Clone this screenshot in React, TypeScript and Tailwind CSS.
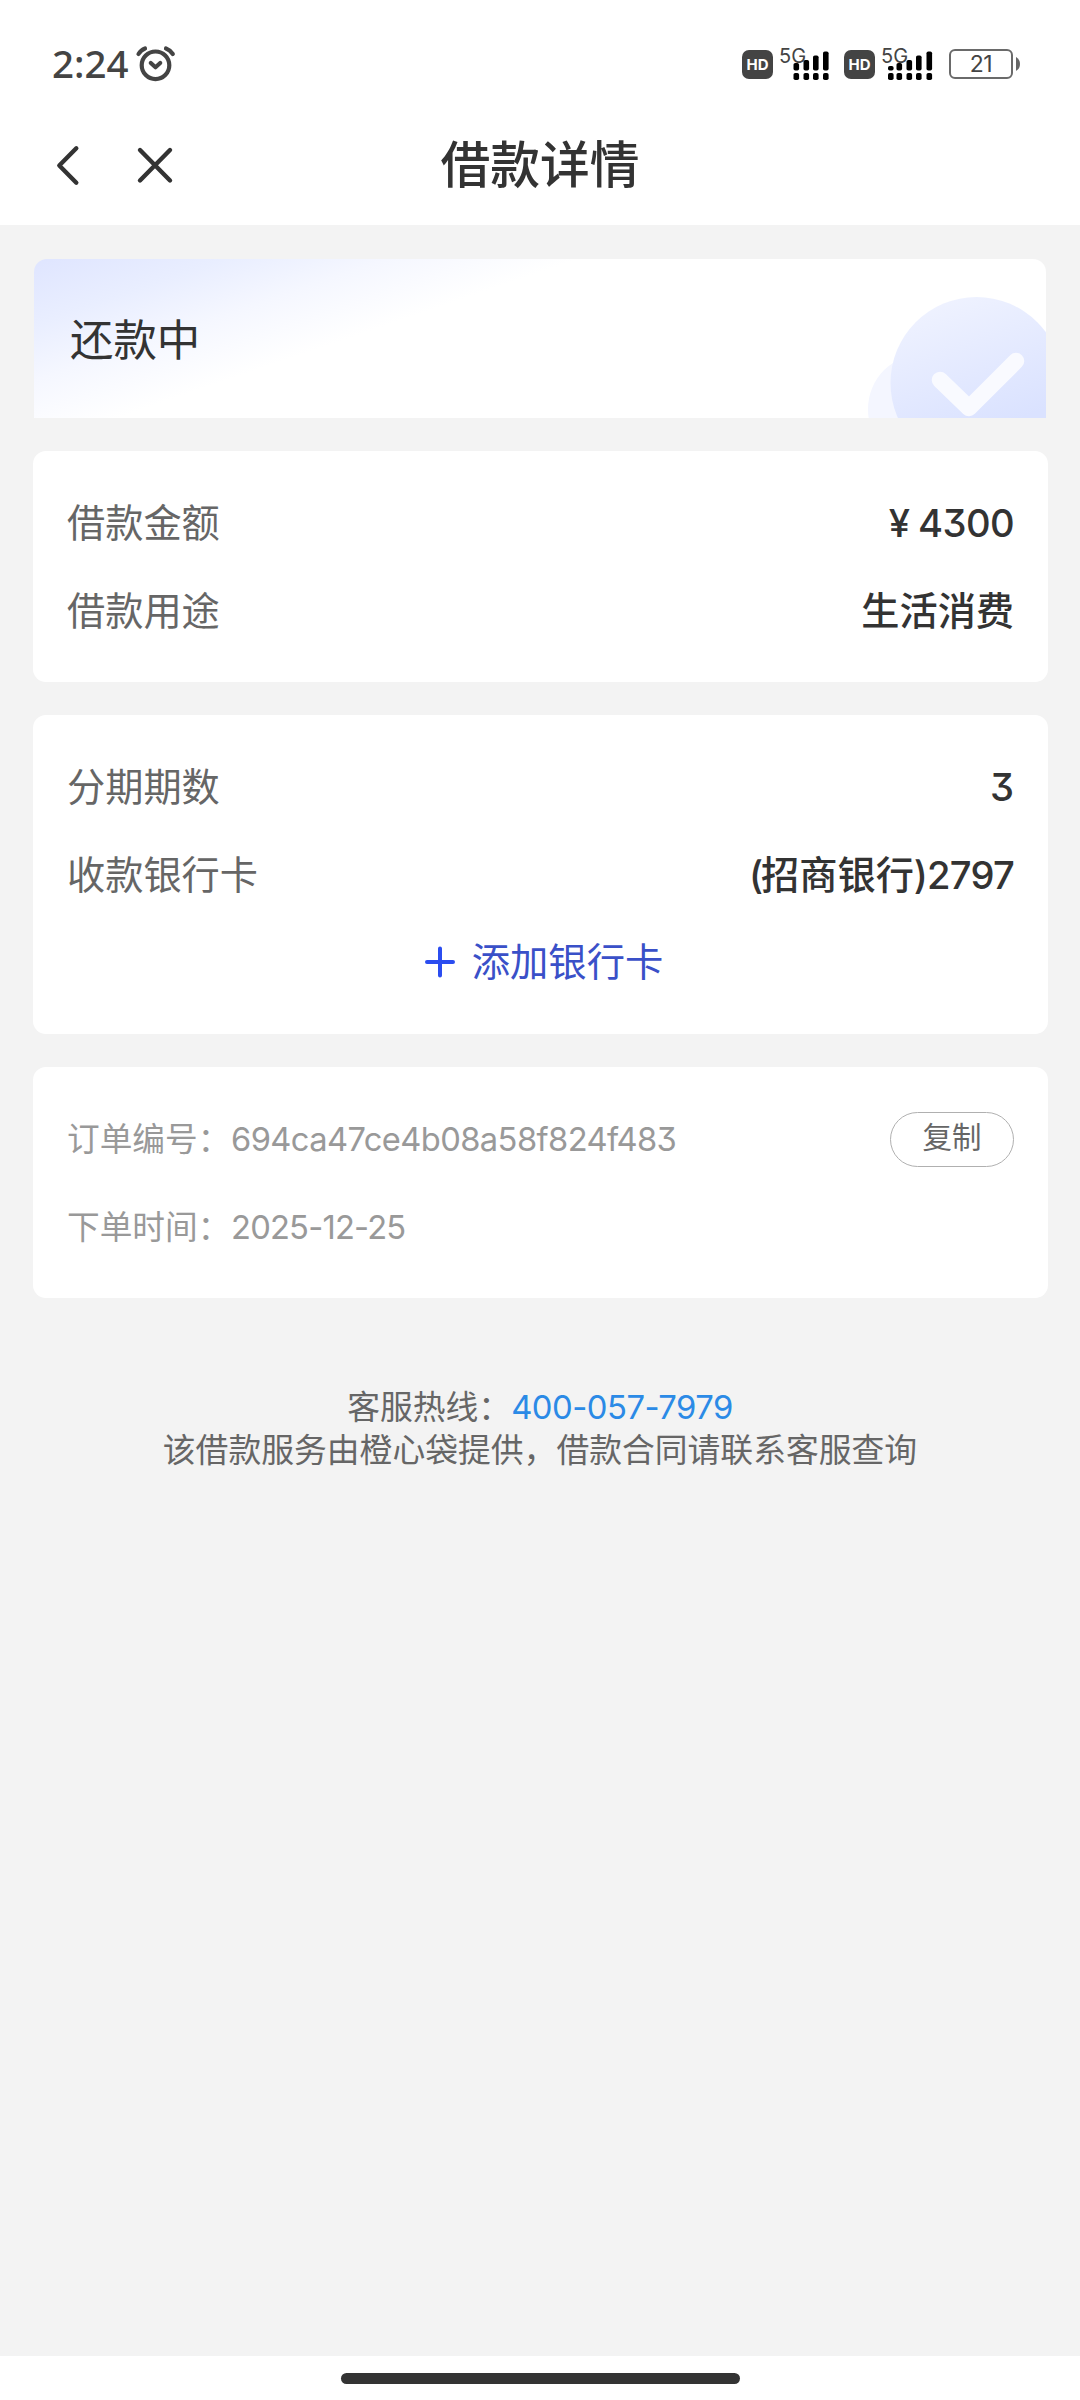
import type { ReactNode } from "react";

function Hd() {
  return (
    <span className="flex h-[29px] w-[31px] items-center justify-center rounded-[7px] bg-[#444] font-['Inter'] text-[15px] leading-none font-bold text-white">
      HD
    </span>
  );
}

function Signal({ bars }: { bars: { x: number; y: number }[] }) {
  return (
    <div className="relative h-[34px] w-[53px] font-['Inter']">
      <span className="absolute -top-[1px] left-0 text-[20px] leading-[20px] text-[#444]">5G</span>
      <svg className="absolute inset-0" width="53" height="34" viewBox="0 0 53 34">
        {bars.map((b) => (
          <g key={b.x} fill="#000">
            <rect x={b.x} y={b.y} width="5.6" height={23.5 - b.y} rx="1.8" />
            <rect x={b.x} y="26" width="5.6" height="7" rx="1.8" />
          </g>
        ))}
      </svg>
    </div>
  );
}

function Battery() {
  return (
    <div className="flex items-center gap-[3px]">
      <span className="flex h-[30px] w-[64px] items-center justify-center rounded-[6px] border-2 border-[#6a6a6a] font-['Inter'] text-[23px] leading-none tracking-[-0.5px] text-[#444]">
        21
      </span>
      <svg width="4" height="14" viewBox="0 0 4 14">
        <path d="M0 0C3 2 4 4 4 7S3 12 0 14Z" fill="#666" />
      </svg>
    </div>
  );
}

function Card({ children, className }: { children: ReactNode; className: string }) {
  return <section className={`mr-[32px] ml-[33px] rounded-[13px] bg-white px-[34px] pt-[28px] ${className}`}>{children}</section>;
}

function Row({ label, children }: { label: string; children: ReactNode }) {
  return (
    <div className="flex h-[88px] items-center justify-between text-[38.2px] leading-none">
      <span className="text-[#666]">{label}</span>
      <span className="font-medium text-[#333]">{children}</span>
    </div>
  );
}

export default function App() {
  return (
    <div className="flex h-[2400px] w-[1080px] flex-col overflow-hidden bg-[#f3f3f3] font-['Inter','Noto_Sans_CJK_SC',sans-serif] [font-feature-settings:'cv09']">
      <header className="h-[225px] bg-white">
        <div className="flex h-[100px] items-start justify-between pt-[42px] pr-[60px] pl-[52px]">
          <div className="flex">
            <span className="w-[80px] pt-[1px] font-['Noto_Sans'] text-[38.5px] leading-[40px] font-medium text-[#444]">2:24</span>
            <svg className="mt-[1px]" width="48" height="44" viewBox="132 43 48 44" fill="none" stroke="#444" strokeLinecap="round" strokeLinejoin="round">
              <circle cx="155.5" cy="65.3" r="13.8" strokeWidth="4.2" />
              <path d="M138.5 54Q141 50 145 48.5M166 48.5Q170 50 172.8 54" strokeWidth="4.2" />
              <path d="M150.8 63L155.5 67.2L160.2 63" strokeWidth="4.2" />
            </svg>
          </div>
          <div className="flex pt-[5px]">
            <div className="flex items-center gap-[6px]">
              <Hd />
              <Signal bars={[{ x: 14.5, y: 16 }, { x: 24.5, y: 13 }, { x: 34, y: 8.5 }, { x: 44, y: 4.5 }]} />
            </div>
            <div className="ml-[12px] flex items-center gap-[6px]">
              <Hd />
              <Signal bars={[{ x: 7, y: 19 }, { x: 15.5, y: 16 }, { x: 25.5, y: 13 }, { x: 35, y: 8.5 }, { x: 45.5, y: 4.5 }]} />
            </div>
            <div className="ml-[15px] flex items-center">
              <Battery />
            </div>
          </div>
        </div>
        <div className="grid h-[125px] grid-cols-[340px_400px_340px]">
          <svg width="200" height="125" viewBox="0 100 200 125" fill="none" stroke="#333" strokeWidth="4.4" strokeLinecap="round" strokeLinejoin="round">
            <path d="M76.3 148.3L59.3 165.5L76.3 182.7" />
            <path d="M140 150L170 180.5M170 150L140 180.5" />
          </svg>
          <h1 className="pt-[40px] text-center text-[49.8px] leading-[50px] font-medium text-[#333]">借款详情</h1>
        </div>
      </header>

      <section className="relative mx-[34px] mt-[34px] flex h-[159px] items-center overflow-hidden rounded-t-[13px] bg-[linear-gradient(161deg,#dfe5ff_0%,#e9eeff_13%,#f5f7ff_24%,#ffffff_37%)] pt-[4px] pl-[36px]">
        <span className="text-[43.4px] leading-none text-[#333]">还款中</span>
        <svg className="absolute top-0 right-0" width="206" height="159" viewBox="840 259 206 159">
          <defs>
            <linearGradient id="disc" x1="0.2" y1="0" x2="0.5" y2="0.8">
              <stop offset="0" stopColor="#f0f3ff" />
              <stop offset="1" stopColor="#dae2ff" />
            </linearGradient>
          </defs>
          <circle cx="923" cy="409" r="55" fill="#f4f6ff" />
          <circle cx="976.5" cy="383" r="86" fill="url(#disc)" />
          <path d="M940 380L969 408L1016 361" fill="none" stroke="#f9faff" strokeWidth="16.5" strokeLinecap="round" strokeLinejoin="round" />
        </svg>
      </section>

      <Card className="mt-[33px] h-[231px]">
        <Row label="借款金额">
          <span className="mr-[8px]">¥</span>
          <span className="tracking-[-0.6px]">4300</span>
        </Row>
        <Row label="借款用途">生活消费</Row>
      </Card>

      <Card className="mt-[33px] h-[319px]">
        <Row label="分期期数">3</Row>
        <Row label="收款银行卡">
          <span className="-mr-[1px] tracking-[-1px]">(</span>招商银行<span className="tracking-[-0.8px]">)2797</span>
        </Row>
        <button className="flex h-[88px] w-full items-center justify-center gap-[17px] pb-[2px] pl-[7px] text-[38.3px] leading-none text-[#3a50c8]">
          <svg width="30" height="32" viewBox="0 0 30 32" stroke="#2b4df0" strokeWidth="4" strokeLinecap="round">
            <path d="M2 16H28M15 2.5V29.5" />
          </svg>
          添加银行卡
        </button>
      </Card>

      <Card className="mt-[33px] h-[231px]">
        <div className="flex h-[88px] items-center justify-between text-[32.7px] leading-none text-[#999]">
          <div className="flex items-center">
            <span className="w-[164px] whitespace-nowrap">订单编号：</span>
            <span className="tracking-[-0.6px]">694ca47ce4b08a58f824f483</span>
          </div>
          <button className="h-[55px] w-[124px] rounded-full border border-[#b0b0b0] pb-[2px] text-[29.5px] leading-none text-[#666]">复制</button>
        </div>
        <div className="flex h-[88px] items-center text-[32.7px] leading-none text-[#999]">
          <span className="w-[164px] whitespace-nowrap">下单时间：</span>
          <span className="tracking-[-0.8px]">2025-12-25</span>
        </div>
      </Card>

      <footer className="pt-[88px] text-center text-[32.8px] leading-[43px] text-[#666]">
        <p>
          客服热线：<a className="tracking-[-0.5px] text-[#2b8ae6]">400-057-7979</a>
        </p>
        <p>该借款服务由橙心袋提供，借款合同请联系客服查询</p>
      </footer>

      <div className="mt-auto h-[44px] bg-white pt-[17px]">
        <div className="mx-auto h-[11px] w-[399px] rounded-full bg-[#333]" />
      </div>
    </div>
  );
}
